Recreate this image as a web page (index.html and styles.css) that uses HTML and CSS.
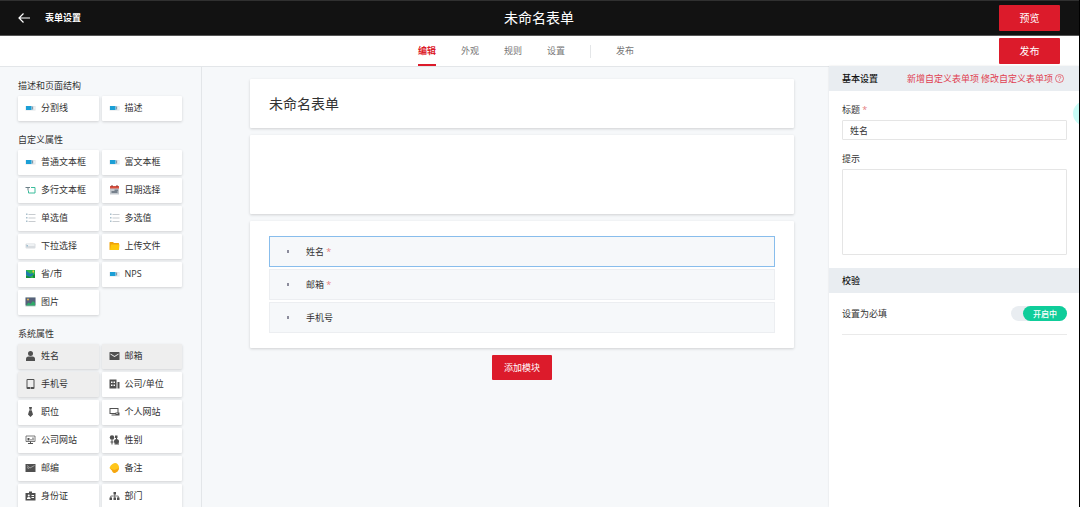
FILE: index.html
```html
<!DOCTYPE html>
<html lang="zh-CN">
<head>
<meta charset="utf-8">
<title>表单设置</title>
<link rel="stylesheet" href="styles.css">
</head>
<body>
<svg class="sprite" aria-hidden="true">
  <symbol id="i-text" viewBox="0 0 20 20"><path fill="#dde2e6" d="M0 6h20v9H0z"/><path fill="#1b9fd6" d="M1 6h11v8H1z"/><path fill="#7f9aab" d="M13 7h2v6h-2z"/><path fill="#fff" d="M17 7h1v6h-1z"/></symbol>
  <symbol id="i-area" viewBox="0 0 20 20"><path fill="none" stroke="#3bbd9c" stroke-width="2" d="M11 5h8v11H6v-5"/><path fill="none" stroke="#6b7f86" stroke-width="2" d="M0 5h9M5 5v6"/></symbol>
  <symbol id="i-date" viewBox="0 0 20 20"><path fill="#c3c8ce" d="M1 4h18v15H1z"/><path fill="#d9503f" d="M1 2h18v5H1z"/><path fill="#8a3a36" d="M4 0h2v4H4zM14 0h2v4h-2z"/><path fill="#76808c" d="M10 9h7v3h-7zM4 12h12v4H4z"/></symbol>
  <symbol id="i-list" viewBox="0 0 20 20"><path fill="#c8ccd0" d="M6 2h14v2H6zM6 9h14v2H6zM6 16h14v2H6z"/><path fill="#a9bfcc" d="M1 1h3v3H1zM1 8h3v3H1zM1 15h3v3H1z"/></symbol>
  <symbol id="i-select" viewBox="0 0 20 20"><rect y="5" width="20" height="10" rx="2" fill="#d9dde1"/><path fill="#eef1f3" d="M3 6h15v4H3z"/><path fill="#9fbfd0" d="M2 8h3v3H2z"/></symbol>
  <symbol id="i-folder" viewBox="0 0 20 20"><path fill="#f0a30a" d="M0 3q0-1 1-1h6l2 2h9q1 0 1 1v13H1q-1 0-1-1z"/><path fill="#ffc80a" d="M3 7h17l-1 11H1z"/></symbol>
  <symbol id="i-map" viewBox="0 0 20 20"><path fill="#2eb84e" d="M1 2h18v16H1z"/><path fill="#1d7cab" d="M1 3l5 4 4 3 4-2 2 3-5 4-5 1-5-5z"/><path fill="#f1c93b" d="M14 3h3v4h-3z"/><path fill="#158a3a" d="M1 14l6 1 5 3H1zM14 13l5-3v8h-3z"/></symbol>
  <symbol id="i-photo" viewBox="0 0 20 20"><path fill="#dbe9e2" d="M0 0h20v20H0z"/><path fill="#56617a" d="M0 1h20v16H0z"/><circle cx="5" cy="5" r="2" fill="#e9b94f"/><path fill="#2fa968" d="M1 17l5-6 4 3 5-6 4 4v5z"/></symbol>
  <symbol id="i-user" viewBox="0 0 20 20"><circle cx="10" cy="5" r="5"/><path d="M1 20v-4q0-5 5-5h8q5 0 5 5v4z"/></symbol>
  <symbol id="i-mail" viewBox="0 0 20 20"><path fill-rule="evenodd" d="M1 2h18q1 0 1 1v14q0 1-1 1H1q-1 0-1-1V3q0-1 1-1zm1 3v2l8 5 8-5V5l-8 5z"/></symbol>
  <symbol id="i-phone" viewBox="0 0 20 20"><path fill-rule="evenodd" d="M4 0h12q2 0 2 2v16q0 2-2 2H4q-2 0-2-2V2q0-2 2-2zm0 2v14h12V2zm5 15v2h2v-2z"/></symbol>
  <symbol id="i-building" viewBox="0 0 20 20"><path fill-rule="evenodd" d="M0 1h14v18H0zM3 5v3h3V5zm5 0v3h3V5zM3 11v3h3v-3zm5 0v3h3v-3z"/><path d="M16 6h4v13h-4z"/></symbol>
  <symbol id="i-tie" viewBox="0 0 20 20"><path d="M7 0h6l-1 5 3 10-5 5-5-5 3-10z"/><path stroke="#fff" d="M7 6h6"/></symbol>
  <symbol id="i-screen" viewBox="0 0 20 20"><path fill-rule="evenodd" d="M0 2h18v12H0zm2 2v8h14V4z"/><path d="M4 15h8v2H4zM12 11h8v6h-8z"/><path fill="#fff" d="M14 12h2v2h-2z"/></symbol>
  <symbol id="i-site" viewBox="0 0 20 20"><path fill="none" stroke="currentColor" stroke-width="1.500" d="M1 2h18v11H1z"/><path d="M4 6h4v5H4zM10 8h2v3h-2zM14 5h2v6h-2zM9 13h2v3h4v2H5v-2h4z"/></symbol>
  <symbol id="i-gender" viewBox="0 0 20 20"><circle cx="5" cy="5" r="4.500"/><circle cx="14" cy="13" r="5"/><path d="M4 9h2v10H4zM2 13h6v2H2zM11 1h5v5h-5zM13 5h2v5h-2zM10 17h9v2h-9z"/></symbol>
  <symbol id="i-zip" viewBox="0 0 20 20"><path d="M0 2h20v16H0z"/><path fill="none" stroke="#bbb" stroke-width="1.500" d="M3 5l6 5 9-5M3 9l4 2"/></symbol>
  <symbol id="i-note" viewBox="0 0 20 20"><path fill="#ffc61a" d="M6 2q6-4 10 0 4 4 3 9-2 7-9 9-4-1-5-5l-5-5q2-6 6-8z"/><path fill="#f5a512" d="M10 20q-4-1-5-5l-4-4 9 3 9-4q-1 8-9 10z"/></symbol>
  <symbol id="i-id" viewBox="0 0 20 20"><path fill-rule="evenodd" d="M0 4h7V1h6v3h7v15H0zm3 10v2h7v-2q-1-2-3.500-2T3 14zm3.500-7a2 2 0 100 4 2 2 0 000-4zM12 8v2h5V8zm0 4v2h5v-2z"/></symbol>
  <symbol id="i-org" viewBox="0 0 20 20"><path d="M8 2h5v5H8zM0 13h5v5H0zM8 13h5v5H8zM15 13h5v5h-5z"/><path fill="none" stroke="currentColor" stroke-width="1.500" d="M10.500 6v8M2.500 14v-4h15v4"/></symbol>
</svg>
<div class="app">
  <header class="topbar">
    <div class="topbar-left">
      <button class="back" type="button" aria-label="返回"><svg viewBox="0 0 12 10"><path d="M5.500 0.500L1 5l4.500 4.500M1 5H12"/></svg></button>
      <strong>表单设置</strong>
    </div>
    <h1 class="topbar-title">未命名表单</h1>
    <button class="btn btn-large" type="button">预览</button>
  </header>
  <div class="toolbar">
    <nav class="tabs">
      <a class="tab active" href="#edit">编辑</a>
      <a class="tab" href="#look">外观</a>
      <a class="tab" href="#rules">规则</a>
      <a class="tab" href="#settings">设置</a>
      <span class="tab-divider"></span>
      <a class="tab" href="#publish">发布</a>
    </nav>
    <button class="btn btn-large" type="button">发布</button>
  </div>
  <div class="workspace">
    <aside class="palette">
      <section class="group">
        <h2>描述和页面结构</h2>
        <div class="tiles">
          <button class="tile" type="button"><svg><use href="#i-text"/></svg>分割线</button>
          <button class="tile" type="button"><svg><use href="#i-text"/></svg>描述</button>
        </div>
      </section>
      <section class="group">
        <h2>自定义属性</h2>
        <div class="tiles">
          <button class="tile" type="button"><svg><use href="#i-text"/></svg>普通文本框</button>
          <button class="tile" type="button"><svg><use href="#i-text"/></svg>富文本框</button>
          <button class="tile" type="button"><svg><use href="#i-area"/></svg>多行文本框</button>
          <button class="tile" type="button"><svg><use href="#i-date"/></svg>日期选择</button>
          <button class="tile" type="button"><svg><use href="#i-list"/></svg>单选值</button>
          <button class="tile" type="button"><svg><use href="#i-list"/></svg>多选值</button>
          <button class="tile" type="button"><svg><use href="#i-select"/></svg>下拉选择</button>
          <button class="tile" type="button"><svg><use href="#i-folder"/></svg>上传文件</button>
          <button class="tile" type="button"><svg><use href="#i-map"/></svg>省/市</button>
          <button class="tile" type="button"><svg><use href="#i-text"/></svg>NPS</button>
          <button class="tile" type="button"><svg><use href="#i-photo"/></svg>图片</button>
        </div>
      </section>
      <section class="group">
        <h2>系统属性</h2>
        <div class="tiles">
          <button class="tile used" type="button"><svg><use href="#i-user"/></svg>姓名</button>
          <button class="tile used" type="button"><svg><use href="#i-mail"/></svg>邮箱</button>
          <button class="tile used" type="button"><svg><use href="#i-phone"/></svg>手机号</button>
          <button class="tile" type="button"><svg><use href="#i-building"/></svg>公司/单位</button>
          <button class="tile" type="button"><svg><use href="#i-tie"/></svg>职位</button>
          <button class="tile" type="button"><svg><use href="#i-screen"/></svg>个人网站</button>
          <button class="tile" type="button"><svg><use href="#i-site"/></svg>公司网站</button>
          <button class="tile" type="button"><svg><use href="#i-gender"/></svg>性别</button>
          <button class="tile" type="button"><svg><use href="#i-zip"/></svg>邮编</button>
          <button class="tile" type="button"><svg><use href="#i-note"/></svg>备注</button>
          <button class="tile" type="button"><svg><use href="#i-id"/></svg>身份证</button>
          <button class="tile" type="button"><svg><use href="#i-org"/></svg>部门</button>
        </div>
      </section>
    </aside>
    <main class="canvas">
      <section class="card card-title"><h2>未命名表单</h2></section>
      <section class="card card-blank"></section>
      <section class="card card-fields">
        <div class="field selected"><i class="grip"></i><span>姓名 <b class="req">*</b></span></div>
        <div class="field"><i class="grip"></i><span>邮箱 <b class="req">*</b></span></div>
        <div class="field"><i class="grip"></i><span>手机号</span></div>
      </section>
      <button class="btn add" type="button">添加模块</button>
    </main>
    <aside class="inspector">
      <div class="bar">
        <h3>基本设置</h3>
        <div class="links">
          <a href="#new">新增自定义表单项</a>
          <a href="#modify">修改自定义表单项</a>
          <svg viewBox="0 0 18 18"><circle cx="9" cy="9" r="8"/><path d="M6.500 7a2.500 2.500 0 115 0c0 1.600-2.500 1.800-2.500 4M9 12.500v1.500"/></svg>
        </div>
      </div>
      <div class="form">
        <label for="title">标题 <b class="req">*</b></label>
        <input class="input" id="title" type="text" value="姓名">
        <label for="hint">提示</label>
        <textarea class="input area" id="hint"></textarea>
      </div>
      <div class="bar"><h3>校验</h3></div>
      <label class="toggle-row">
        <span>设置为必填</span>
        <input class="toggle-input" type="checkbox" role="switch" checked>
        <span class="toggle"><span class="knob">开启中</span></span>
      </label>
    </aside>
  </div>
  <div class="bubble"></div>
</div>
</body>
</html>
```

FILE: styles.css
```css
* { box-sizing: border-box; }
body {
  margin: 0;
  font: 9px/14px "Open Sans", "Noto Sans CJK SC", sans-serif;
  color: #333;
}
h1, h2, h3 { margin: 0; font: inherit; }
a { text-decoration: none; }
button, input, textarea { font: inherit; color: inherit; margin: 0; }
button { cursor: pointer; }
.sprite { display: none; }
.app {
  position: relative;
  height: 100vh;
  display: grid;
  grid-template-rows: 36px 30px minmax(0, 1fr);
  overflow: hidden;
  background: #f6f8fa;
  border-right: 1px solid #000;
}
.topbar {
  display: grid;
  grid-template-columns: 1fr auto 1fr;
  align-items: center;
  padding: 0 19px 0 18px;
  background: #121212;
  border-top: 1px solid #303030;
  border-bottom: 1px solid #555;
  color: #fff;
}
.topbar-left { display: flex; align-items: center; gap: 15px; }
.back { display: flex; padding: 0; border: 0; background: none; }
.back svg { width: 12px; height: 10px; fill: none; stroke: #fff; stroke-width: 1.2; }
.topbar-title { font-size: 14px; line-height: 20px; }
.btn {
  padding: 6px 12px;
  border: 0;
  border-radius: 1px;
  background: #dc1b2b;
  color: #fff;
  line-height: 13px;
}
.btn-large {
  justify-self: end;
  min-width: 61px;
  padding: 6px 20px;
  font-size: 10px;
  line-height: 14px;
}
.toolbar {
  display: grid;
  grid-template-columns: 1fr auto 1fr;
  align-items: center;
  padding: 0 19px 0 18px;
  background: #fff;
}
.tabs {
  grid-column: 2;
  align-self: stretch;
  display: flex;
  gap: 25px;
  align-items: center;
  padding-right: 26px;
}
.tab {
  height: 30px;
  line-height: 30px;
  color: #777;
}
.tab.active {
  color: #dc1b2b;
  font-weight: 700;
  border-bottom: 2px solid #dc1b2b;
}
.tab-divider { width: 1px; height: 13px; background: #e4e6e8; }
.workspace {
  display: grid;
  grid-template-columns: 202px minmax(0, 1fr) 250px;
  min-height: 0;
}
.palette {
  overflow: hidden;
  padding: 12px 19px 12px 18px;
  border-top: 1px solid #e3e6e9;
  border-right: 1px solid #e3e6e9;
}
.group { margin-bottom: 12px; }
.group h2 { margin-bottom: 3px; }
.tiles { display: grid; grid-template-columns: 1fr 1fr; gap: 3px; }
.tile {
  display: flex;
  align-items: center;
  gap: 5px;
  height: 25px;
  padding: 0 7px 2px;
  border: 0;
  border-radius: 1px;
  background: #fff;
  box-shadow: 0 1px 3px rgba(0, 0, 0, 0.16);
  white-space: nowrap;
}
.tile.used { background: #eee; }
.tile svg { width: 11px; height: 10px; flex: none; fill: #505050; color: #505050; }
.canvas {
  display: flex;
  flex-direction: column;
  gap: 7px;
  padding: 12px 35px 12px 48px;
  border-top: 1px solid #e3e6e9;
  overflow: hidden;
}
.card {
  padding: 14px 19px;
  border-radius: 1px;
  background: #fff;
  box-shadow: 0 1px 3px rgba(0, 0, 0, 0.16);
}
.card-title h2 { font-size: 14px; line-height: 21px; }
.card-blank { min-height: 79px; }
.card-fields {
  display: flex;
  flex-direction: column;
  gap: 2px;
  padding: 15px 19px;
}
.field {
  display: flex;
  align-items: center;
  gap: 17px;
  height: 31px;
  padding: 0 17px;
  border: 1px solid #eceef1;
  background: #f6f8fa;
}
.field.selected { border-color: #88bdec; }
.grip { width: 2px; height: 3px; background: #8c8c9c; }
.req { color: #e58080; font-weight: 400; }
.add { align-self: center; }
.inspector {
  overflow: hidden;
  background: #fff;
  box-shadow: 0 0 2px rgba(0, 0, 0, 0.1);
}
.bar {
  display: flex;
  align-items: center;
  justify-content: space-between;
  height: 25px;
  padding: 0 15px 0 13px;
  background: #e9edf1;
}
.bar h3 { font-weight: 500; color: #111; }
.links { display: flex; align-items: center; gap: 2px; color: #e04050; }
.links a { color: inherit; }
.links svg { width: 9px; height: 9px; fill: none; stroke: #e04050; stroke-width: 1.4; }
.form { display: flex; flex-direction: column; padding: 12px 12px 13px 13px; }
.form label { margin-bottom: 3px; }
.input {
  height: 20px;
  padding: 0 7px;
  border: 1px solid #e5e5e5;
  border-radius: 1px;
  background: #fff;
  outline: 0;
  margin-bottom: 12px;
}
.area { height: 86px; margin-bottom: 0; resize: none; }
.toggle-row {
  display: flex;
  align-items: center;
  justify-content: space-between;
  height: 42px;
  margin: 0 12px 0 13px;
  border-bottom: 1px solid #eaeaea;
  cursor: pointer;
}
.toggle-input { position: absolute; opacity: 0; }
.toggle {
  display: flex;
  width: 56px;
  border-radius: 8px;
  background: #e9edf1;
}
.toggle-input:checked + .toggle { justify-content: flex-end; }
.knob {
  padding: 0 10px;
  border-radius: 8px;
  background: #0fcd9a;
  color: #fff;
  font-size: 8px;
  font-weight: 500;
  line-height: 15px;
}
.bubble {
  position: absolute;
  top: 101px;
  right: -19px;
  width: 25px;
  height: 25px;
  border-radius: 50%;
  background: #c8fcf6;
}
```
